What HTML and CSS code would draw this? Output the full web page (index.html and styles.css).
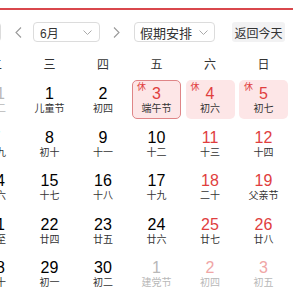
FILE: index.html
```html
<!DOCTYPE html>
<html lang="zh-CN">
<head>
    <meta charset="UTF-8">
    <meta name="viewport" content="width=device-width, initial-scale=1.0">
    <title>万年历</title>
    <link rel="stylesheet" href="styles.css">
</head>
<body>
    <div class="calendar">
        <div class="toolbar">
            <div class="select year-select"><span>2022年</span><svg width="9" height="5" viewBox="0 0 9 5"><polyline points="0.5,0.5 4.5,4.5 8.5,0.5" fill="none" stroke="#aaa" stroke-width="1"/></svg></div>
            <span class="arrow prev"><svg width="7" height="11" viewBox="0 0 7 11"><polyline points="6,0.5 1,5.5 6,10.5" fill="none" stroke="#999" stroke-width="1.1"/></svg></span>
            <div class="select month-select"><span>6月</span><svg width="9" height="5" viewBox="0 0 9 5"><polyline points="0.5,0.5 4.5,4.5 8.5,0.5" fill="none" stroke="#aaa" stroke-width="1"/></svg></div>
            <span class="arrow next"><svg width="7" height="11" viewBox="0 0 7 11"><polyline points="1,0.5 6,5.5 1,10.5" fill="none" stroke="#999" stroke-width="1.1"/></svg></span>
            <div class="select holiday-select"><span>假期安排</span><svg width="9" height="5" viewBox="0 0 9 5"><polyline points="0.5,0.5 4.5,4.5 8.5,0.5" fill="none" stroke="#aaa" stroke-width="1"/></svg></div>
            <button type="button" class="today-btn">返回今天</button>
        </div>

        <div class="weekdays">
            <span>一</span><span>二</span><span>三</span><span>四</span><span>五</span><span>六</span><span>日</span>
        </div>

        <div class="days">
            <!-- 第一行 -->
            <div class="day other"><span class="num">30</span><span class="lunar">初一</span></div>
            <div class="day other"><span class="num">31</span><span class="lunar">初二</span></div>
            <div class="day"><span class="num">1</span><span class="lunar">儿童节</span></div>
            <div class="day"><span class="num">2</span><span class="lunar">初四</span></div>
            <div class="day rest selected"><i class="tag">休</i><span class="num">3</span><span class="lunar">端午节</span></div>
            <div class="day rest"><i class="tag">休</i><span class="num">4</span><span class="lunar">初六</span></div>
            <div class="day rest"><i class="tag">休</i><span class="num">5</span><span class="lunar">初七</span></div>
            <!-- 第二行 -->
            <div class="day"><span class="num">6</span><span class="lunar">初八</span></div>
            <div class="day"><span class="num">7</span><span class="lunar">初九</span></div>
            <div class="day"><span class="num">8</span><span class="lunar">初十</span></div>
            <div class="day"><span class="num">9</span><span class="lunar">十一</span></div>
            <div class="day"><span class="num">10</span><span class="lunar">十二</span></div>
            <div class="day weekend"><span class="num">11</span><span class="lunar">十三</span></div>
            <div class="day weekend"><span class="num">12</span><span class="lunar">十四</span></div>
            <!-- 第三行 -->
            <div class="day"><span class="num">13</span><span class="lunar">十五</span></div>
            <div class="day"><span class="num">14</span><span class="lunar">十六</span></div>
            <div class="day"><span class="num">15</span><span class="lunar">十七</span></div>
            <div class="day"><span class="num">16</span><span class="lunar">十八</span></div>
            <div class="day"><span class="num">17</span><span class="lunar">十九</span></div>
            <div class="day weekend"><span class="num">18</span><span class="lunar">二十</span></div>
            <div class="day weekend"><span class="num">19</span><span class="lunar">父亲节</span></div>
            <!-- 第四行 -->
            <div class="day"><span class="num">20</span><span class="lunar">廿二</span></div>
            <div class="day"><span class="num">21</span><span class="lunar">夏至</span></div>
            <div class="day"><span class="num">22</span><span class="lunar">廿四</span></div>
            <div class="day"><span class="num">23</span><span class="lunar">廿五</span></div>
            <div class="day"><span class="num">24</span><span class="lunar">廿六</span></div>
            <div class="day weekend"><span class="num">25</span><span class="lunar">廿七</span></div>
            <div class="day weekend"><span class="num">26</span><span class="lunar">廿八</span></div>
            <!-- 第五行 -->
            <div class="day"><span class="num">27</span><span class="lunar">廿九</span></div>
            <div class="day"><span class="num">28</span><span class="lunar">三十</span></div>
            <div class="day"><span class="num">29</span><span class="lunar">初一</span></div>
            <div class="day"><span class="num">30</span><span class="lunar">初二</span></div>
            <div class="day other"><span class="num">1</span><span class="lunar">建党节</span></div>
            <div class="day other weekend"><span class="num">2</span><span class="lunar">初四</span></div>
            <div class="day other weekend"><span class="num">3</span><span class="lunar">初五</span></div>
        </div>
    </div>
</body>
</html>
```

FILE: styles.css
```css
html, body {
    margin: 0;
    padding: 0;
    background: #fff;
    overflow: hidden;
}

body {
    font-family: "Liberation Sans", "Noto Sans CJK SC", Arial, sans-serif;
    color: #333;
}

.calendar {
    width: 375px;
    margin: 8px 0 0 -82px;
    border-top: 2px solid #d9474c;
}

.toolbar {
    display: flex;
    align-items: center;
    height: 20px;
    padding: 12px 0 0 3px;
}

.select {
    box-sizing: border-box;
    height: 20px;
    display: flex;
    align-items: center;
    justify-content: space-between;
    border: 1px solid #dcdcdc;
    border-radius: 4px;
    font-size: 12px;
    color: #333;
    background: #fff;
}

.year-select {
    width: 80px;
    padding: 0 8px;
}

.month-select {
    width: 67px;
    margin-left: 7px;
    padding: 0 7px 0 6px;
}

.holiday-select {
    width: 81px;
    margin-left: 10px;
    padding: 0 6px 0 5px;
    font-size: 13px;
}

.arrow {
    width: 16px;
    height: 20px;
    display: flex;
    align-items: center;
    justify-content: center;
}

.arrow.prev {
    margin-left: 9px;
}

.arrow.next {
    margin-left: 8px;
}

.today-btn {
    width: 53px;
    height: 20px;
    margin-left: 17px;
    padding: 0;
    border: none;
    border-radius: 3px;
    background: #f2f2f3;
    font-family: inherit;
    font-size: 12px;
    color: #333;
}

.weekdays {
    display: grid;
    grid-template-columns: repeat(7, 49px);
    column-gap: 4.5px;
    margin-top: 11px;
    height: 24px;
    line-height: 24px;
    text-align: center;
    font-size: 12px;
    color: #333;
}

.days {
    display: grid;
    grid-template-columns: repeat(7, 49px);
    grid-auto-rows: 39px;
    gap: 4.5px;
    margin-top: 3px;
}

.day {
    position: relative;
    box-sizing: border-box;
    display: flex;
    flex-direction: column;
    align-items: center;
    padding-top: 5px;
    border: 1px solid transparent;
    border-radius: 5px;
}

.day .num {
    font-size: 16px;
    line-height: 16px;
    color: #000;
}

.day .lunar {
    font-size: 10px;
    line-height: 14px;
    color: #333;
}

.day.weekend .num,
.day.rest .num {
    color: #e03e3e;
}

.day.rest {
    background: #fde6e7;
}

.day.selected {
    border-color: #df8587;
}

.day .tag {
    position: absolute;
    top: 1px;
    left: 4px;
    font-style: normal;
    font-size: 9px;
    line-height: 10px;
    color: #e03e3e;
}

.day.other .num,
.day.other .lunar {
    color: #b8b8b8;
}

.day.other.weekend .num {
    color: #f0a6a6;
}
```
